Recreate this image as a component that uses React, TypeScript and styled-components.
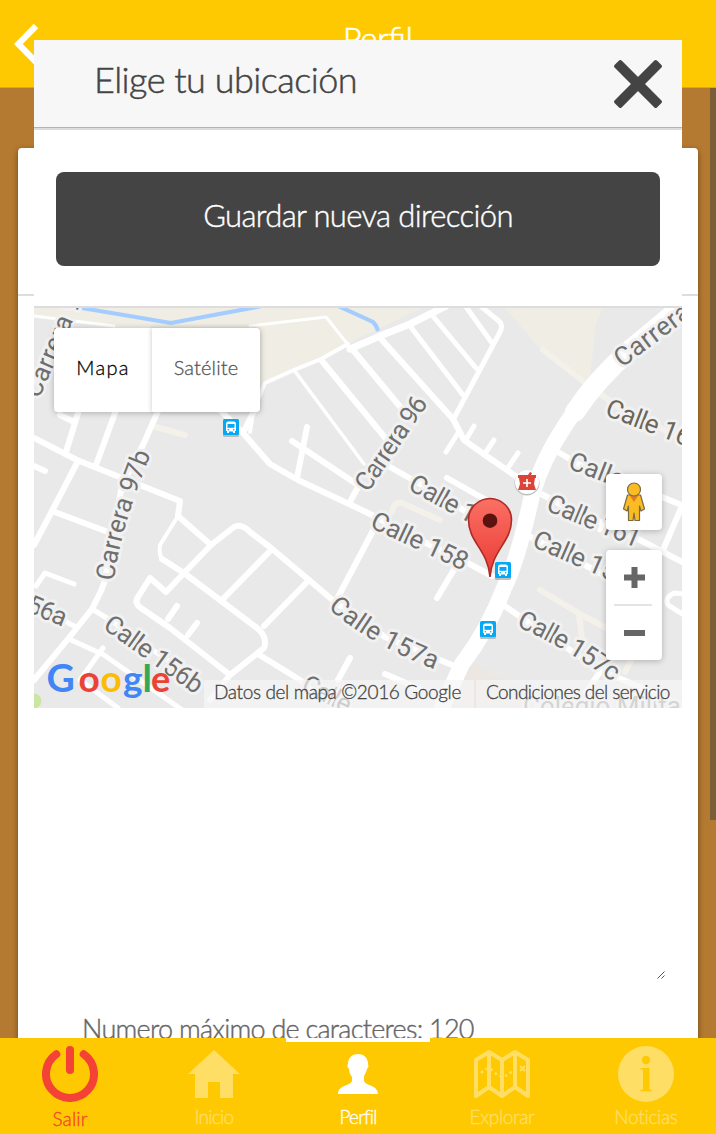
import React from "react";
import styled, { createGlobalStyle } from "styled-components";

const yellow = "#ffc901";
const faded = "#ffde66";
const dark = "#444444";
const lato = `Lato, "Open Sans", sans-serif`;

const GlobalStyle = createGlobalStyle`
  * { box-sizing: border-box; }
  html, body, #root { height: 100%; }
  body { margin: 0; overflow: hidden; background: #b57a31; font-family: ${lato}; font-weight: 300; }
`;

const Screen = styled.div`
  position: relative;
  display: flex;
  flex-direction: column;
  height: 1134px;
  overflow: hidden;
  background: #b57a31;
`;

const TopBar = styled.header`
  flex: none;
  height: 88px;
  display: flex;
  align-items: flex-start;
  padding: 24px 0 0 14px;
  background: ${yellow};
  border-bottom: 1px solid #dca916;
`;

const PageTitle = styled.h1`
  flex: 1;
  margin: -5px 18px 0 16px;
  text-align: center;
  color: #fff;
  font-size: 32px;
  line-height: 38px;
  font-weight: 300;
  -webkit-text-stroke: 0.7px #fff;
`;

const Body = styled.main`
  flex: 1;
  min-height: 0;
  display: flex;
  justify-content: space-between;
`;

const Card = styled.section`
  width: 680px;
  height: 910px;
  margin: 60px 0 0 18px;
  padding: 146px 32px 0 64px;
  display: flex;
  flex-direction: column;
  align-items: stretch;
  background: linear-gradient(#ddd, #ddd) 0 146px / 100% 2px no-repeat, #fff;
  border-radius: 4px 4px 0 0;
  box-shadow: 0 2px 6px rgba(0, 0, 0, 0.4);
`;

const NoteField = styled.div`
  height: 686px;
  display: flex;
  justify-content: flex-end;
  align-items: flex-end;
`;

const Hint = styled.p`
  margin: 32px 0 0 0;
  color: #666;
  font-size: 27px;
  line-height: 34px;
  letter-spacing: -0.73px;
  white-space: nowrap;
  -webkit-text-stroke: 0.4px #666;
`;

const ScrollThumb = styled.div`
  width: 6px;
  height: 732px;
  background: #7b5e38;
`;

const TabBar = styled.nav`
  position: relative;
  z-index: 2;
  flex: none;
  height: 96px;
  margin: 0 -4px 0 -2px;
  display: grid;
  grid-template-columns: repeat(5, 144px);
  background: ${yellow};
`;

const Tab = styled.a<{ $color: string; $active?: boolean }>`
  display: flex;
  flex-direction: column;
  align-items: center;
  padding-top: 4px;
  color: ${(p) => p.$color};
  border-top: 4px solid ${(p) => (p.$active ? "#fff" : "transparent")};
`;

const TabLabel = styled.span<{ $track: number; $drop?: number }>`
  margin-top: ${(p) => 3 + (p.$drop ?? 0)}px;
  font-size: 19px;
  line-height: 24px;
  letter-spacing: ${(p) => p.$track}px;
  -webkit-text-stroke: 0.35px currentColor;
`;

const Modal = styled.div`
  position: absolute;
  z-index: 1;
  left: 34px;
  top: 40px;
  width: 648px;
  display: flex;
  flex-direction: column;
  background: #fff;
`;

const ModalHeader = styled.div`
  height: 90px;
  display: flex;
  justify-content: space-between;
  align-items: flex-start;
  padding: 18px 18px 0 60px;
  background: #f7f7f7;
  border-bottom: 2px solid #ddd;
  box-shadow: inset 0 -1px 0 #b3b3b3;
`;

const ModalTitle = styled.h2`
  margin: 1px 0 0;
  color: ${dark};
  font-size: 36px;
  line-height: 40px;
  letter-spacing: -0.5px;
  font-weight: 300;
  -webkit-text-stroke: 0.5px ${dark};
`;

const ModalActions = styled.div`
  height: 178px;
  padding: 42px 22px 0;
  border-bottom: 2px solid #ddd;
`;

const SaveButton = styled.button`
  display: block;
  width: 100%;
  height: 94px;
  padding: 0 0 8px;
  border: 0;
  border-radius: 8px;
  background: ${dark};
  color: #fff;
  font-family: ${lato};
  font-weight: 300;
  font-size: 31px;
  letter-spacing: -0.65px;
  -webkit-text-stroke: 0.4px #fff;
`;

const MapView = styled.div`
  position: relative;
  width: 648px;
  height: 400px;
  overflow: hidden;
`;

const MapTypes = styled.div`
  position: absolute;
  left: 20px;
  top: 20px;
  display: flex;
  height: 84px;
  border-radius: 4px;
  box-shadow: 0 1px 6px rgba(0, 0, 0, 0.25);
`;

const MapType = styled.div<{ $selected?: boolean }>`
  width: ${(p) => (p.$selected ? 98 : 108)}px;
  display: flex;
  align-items: center;
  justify-content: center;
  padding-bottom: 7px;
  background: #fff;
  border-radius: ${(p) => (p.$selected ? "4px 0 0 4px" : "0 4px 4px 0")};
  box-shadow: ${(p) => (p.$selected ? "none" : "-1px 0 4px rgba(0, 0, 0, 0.16)")};
  color: ${(p) => (p.$selected ? "#000" : "#565656")};
  font-size: 20px;
  letter-spacing: ${(p) => (p.$selected ? 1.3 : 0.15)}px;
  -webkit-text-stroke: 0.3px currentColor;
`;

const MapControls = styled.div`
  position: absolute;
  left: 572px;
  top: 166px;
  width: 56px;
  display: flex;
  flex-direction: column;
  gap: 20px;
`;

const ControlBox = styled.div<{ $h: number }>`
  height: ${(p) => p.$h}px;
  display: flex;
  flex-direction: column;
  align-items: center;
  justify-content: center;
  background: #fff;
  border-radius: 4px;
  box-shadow: 0 1px 6px rgba(0, 0, 0, 0.25);
`;

const ZoomHalf = styled.div`
  flex: 1;
  display: flex;
  align-items: center;
  padding-left: 1px;
`;

const ZoomRule = styled.div`
  width: 38px;
  height: 2px;
  margin-right: 2px;
  background: #e4e4e4;
`;

const MapFooter = styled.div`
  position: absolute;
  right: 0;
  bottom: 0;
  height: 28px;
  display: flex;
  gap: 2px;
`;

const FooterItem = styled.span<{ $w: number; $track: number }>`
  width: ${(p) => p.$w}px;
  padding-left: 10px;
  background: rgba(245, 245, 245, 0.7);
  color: ${dark};
  font-size: 19px;
  line-height: 23px;
  letter-spacing: ${(p) => p.$track}px;
  white-space: nowrap;
  -webkit-text-stroke: 0.3px ${dark};
`;

const roads: [number, string][] = [
  [3, "M34 316L114 326M250 326L326 317L349 346"],
  [4, "M250 432L253 412L265 383L294 370L321 359L348 344"],
  [7, "M350 349L380 336L410 324L446 306"],
  [3.5, "M294 370L364 464"],
  [6, "M322 361L387 440M353 350L402 409M382 340L453 419L464 440L485 455L520 479"],
  [5, "M410 326L463 395M432 315L476 368M464 304L492 343M478 304L500 322Q503 326 500 332L453 420M458 433L446 452"],
  [5, "M467 438L474 426M484 455L494 440M507 469L518 453"],
  [6, "M219 409L243 433L255 409M243 433L270 464L298 480L366 512L430 545L466 562L492 576"],
  [6, "M307 427L297 478M292 441L355 483M350 502L358 487M383 463L420 484L490 526M447 478L495 505"],
  [6, "M375 527L338 597M455 568L437 598"],
  [6, "M178 516L211 545L234 527Q241 523 250 532L271 548L309 580L335 602L385 637L452 665"],
  [6, "M211 545L184 573L166 592L150 578L138 597Q134 603 141 608L170 628L230 675L210 700M168 619L177 606M188 635L197 623"],
  [4, "M178 516L160 545Q158 558 166 562"],
  [6, "M162 559L184 573L220 600L257 628Q268 637 264 648L230 675M271 550L222 600M309 580L264 626"],
  [6, "M34 438L77 460L127 480L180 501L178 516M78 413L66 452M60 415L74 422M115 413L96 465M158 411L143 445L122 485L105 580L101 591L92 609L68 639L34 680"],
  [6, "M34 466L45 471M77 463L52 511L34 545M52 511L108 532"],
  [5, "M36 586L45 573L74 584M34 605L76 627M92 609L110 620L200 683M69 639L104 655L185 712M103 648L80 680L118 708"],
  [6, "M258 654L300 680L330 706M350 658L338 680M385 674L420 689"],
  [6, "M558 452L580 465L640 488L684 506M534 490L560 504L640 540L684 563M682 506L663 550M523 533L540 542L610 578L650 596"],
  [5, "M684 594L674 593Q664 598 668 605L684 615M600 530L606 517"],
  [6, "M502 604L522 618L600 670L684 706M600 672L586 692"],
];

interface MapLabel {
  id: string;
  text: string;
  d: string;
  length: number;
  color?: string;
}

const labels: MapLabel[] = [
  { id: "c97a", text: "Carrera 9", d: "M39 399Q58 356 82 300", length: 108 },
  { id: "c97b", text: "Carrera 97b", d: "M114 581Q120 528 153 449", length: 133 },
  { id: "c96", text: "Carrera 96", d: "M368 493L430 401", length: 108 },
  { id: "c159", text: "Calle 159", d: "M407 489L499 539", length: 100 },
  { id: "c158", text: "Calle 158", d: "M369 527L468 573", length: 104 },
  { id: "c157a", text: "Calle 157a", d: "M328 608Q372 647 444 673", length: 124 },
  { id: "c156b", text: "Calle 156b", d: "M102 628L199 697", length: 115 },
  { id: "c156a", text: "56a", d: "M25 611L68 629", length: 41 },
  { id: "c156", text: "Calle", d: "M300 690L390 736", length: 52 },
  { id: "carr", text: "Carrera 9", d: "M622 368L716 298", length: 110 },
  { id: "c160b", text: "Calle 160", d: "M604 415L706 454", length: 103, color: "#6b6658" },
  { id: "c162", text: "Calle 16", d: "M567 468L660 504", length: 92 },
  { id: "c161", text: "Calle 161", d: "M545 510L644 551", length: 99 },
  { id: "c159b", text: "Calle 159", d: "M531 546L632 590", length: 103 },
  { id: "c157c", text: "Calle 157c", d: "M516 626Q570 650 618 686", length: 112 },
];

const logo: [string, number, number, string][] = [
  ["G", 46.5, 39, "#4285f4"],
  ["o", 78.5, 37, "#ea4335"],
  ["o", 100.5, 37, "#fbbc05"],
  ["g", 123, 37, "#4285f4"],
  ["l", 142.5, 38, "#34a853"],
  ["e", 151, 36, "#ea4335"],
];

function Bus({ x, y }: { x: number; y: number }) {
  return (
    <g transform={`translate(${x} ${y})`}>
      <rect y="1" width="16" height="17" rx="1.5" fill="#a5a5a5" opacity="0.7" />
      <rect width="16" height="16" rx="1.5" fill="#03a9f4" />
      <path d="M3 5Q3 2.500 5 2.500H11Q13 2.500 13 5V12H12V14H10V12.500H6V14H4V12H3Z" fill="#fff" />
      <rect x="4.500" y="5" width="7" height="3.800" fill="#03a9f4" />
      <circle cx="5.300" cy="10.700" r=".8" fill="#03a9f4" />
      <circle cx="10.700" cy="10.700" r=".8" fill="#03a9f4" />
    </g>
  );
}

function StreetMap() {
  return (
    <svg width="648" height="400" viewBox="34 308 648 400" fill="none">
      <defs>
        <linearGradient id="pin" x1="0" y1="0" x2="0" y2="1">
          <stop offset="0" stopColor="#fb7064" />
          <stop offset="1" stopColor="#e93a34" />
        </linearGradient>
        {labels.map((l) => (
          <path key={l.id} id={l.id} d={l.d} />
        ))}
      </defs>
      <rect x="34" y="308" width="648" height="400" fill="#e9e9e9" />
      <path d="M34 308V316L114 326L160 390H258L265 383L294 370L347 344L422 308Z" fill="#efede4" />
      <path d="M505 308H602L596 324L589 386L541 350Z" fill="#efede4" />
      <path d="M466 660L500 678L540 692V708H440Z" fill="#ece8e1" />
      <circle cx="34" cy="701" r="7.500" fill="#cbe6a3" />
      <path d="M82 308L171 323L262 306M336 305L373 322Q377 326 378 331" stroke="#a3ccff" strokeWidth="4" />
      <g stroke="#f4f0ea" strokeWidth="6" strokeLinecap="round" strokeLinejoin="round">
        <path d="M156 427L185 435M392 512Q394 501 402 503L440 520M543 350L592 388L620 408L684 440" />
        <path d="M540 590L580 614L640 646M579 615L583 645M634 655L625 672" />
      </g>
      <g stroke="#fff" strokeLinecap="round" strokeLinejoin="round">
        {roads.map(([w, d]) => (
          <path key={d} d={d} strokeWidth={w} />
        ))}
        <path d="M690 300L630 350Q596 380 566 424Q542 460 532 495Q518 560 504 588Q488 630 462 664L440 712" strokeWidth="16" />
        <path d="M690 300L630 350Q596 380 575 412" strokeWidth="20" />
      </g>
      <g fontFamily="Roboto, sans-serif" fontSize="26" fontWeight="400" stroke="#f1f1f1" strokeWidth="6" strokeLinejoin="round" paintOrder="stroke">
        {labels.map((l) => (
          <text key={l.id} fill={l.color ?? "#6f6f6f"}>
            <textPath href={`#${l.id}`} textLength={l.length}>
              {l.text}
            </textPath>
          </text>
        ))}
        <text x="523" y="715" fill="#858585" textLength="158">Colegio Milita</text>
      </g>
      <Bus x={223} y={419} />
      <Bus x={495} y={562} />
      <Bus x={480} y={621} />
      <circle cx="527" cy="483" r="12.500" fill="#bdbdbd" />
      <circle cx="527" cy="482" r="12" fill="#fff" />
      <path d="M518 475H528L530 472L532 473L531 475H536V478H535L534 484L536 490H518L520 484L519 478H518Z" fill="#db4437" />
      <path d="M527 479V487M523 483H531" stroke="#fff" strokeWidth="1.600" />
      <path d="M490 577C488 550 468.500 542 468.500 520A21.500 21.500 0 0 1 511.500 520C511.500 542 492 550 490 577Z" fill="url(#pin)" stroke="#ad2b27" strokeWidth="1.600" />
      <circle cx="490" cy="520.700" r="7.300" fill="#5c120f" />
      <text y="692" fontFamily="Lato, sans-serif" fontWeight="700">
        {logo.map(([ch, x, size, color]) => (
          <tspan key={x} x={x} fontSize={size} fill={color}>
            {ch}
          </tspan>
        ))}
      </text>
    </svg>
  );
}

function Pegman() {
  return (
    <svg width="24" height="40" viewBox="0 0 24 40">
      <path d="M5.500 13H18.500L22.500 27L19 29L17.500 24V38.500H13L12 31L11 38.500H6.500V24L5 29L1.500 27Z" fill="#fbbb22" stroke="#7c6a43" strokeWidth="1.200" strokeLinejoin="round" />
      <path d="M8 14H16L12 20Z" fill="#e37b25" />
      <circle cx="12" cy="7.500" r="6.500" fill="#fbbb22" stroke="#7c6a43" strokeWidth="1.200" />
    </svg>
  );
}

function CloseIcon() {
  return (
    <svg width="52" height="52" viewBox="0 0 52 52" fill={dark}>
      <rect x="-4" y="21" width="60" height="10" rx="1.8" transform="rotate(45 26 26)" />
      <rect x="-4" y="21" width="60" height="10" rx="1.8" transform="rotate(-45 26 26)" />
    </svg>
  );
}

function PowerIcon() {
  return (
    <svg width="56" height="56" viewBox="0 0 56 56" fill="none" stroke="currentColor" strokeWidth="8" strokeLinecap="round">
      <path d="M14.300 8.300A24 24 0 1 0 41.700 8.300M28 4V24" />
    </svg>
  );
}

function HomeIcon() {
  return (
    <svg width="56" height="56" viewBox="0 0 56 56" fill="currentColor">
      <path d="M28 4L54 28H47V52H34V36H22V52H9V28H2Z" />
    </svg>
  );
}

function PersonIcon() {
  return (
    <svg width="56" height="56" viewBox="0 0 56 56" fill="currentColor">
      <path d="M28 8C34 8 38 12 38 18C39 20 38 22 37 23C36 27 34 29 34 31V35C36 40 48 39 48 48H8C8 39 20 40 22 35V31C20 28 19 26 19 23C17 21 17 19 18 18C18 12 22 8 28 8Z" />
    </svg>
  );
}

function MapIcon() {
  return (
    <svg width="56" height="56" viewBox="0 0 56 56" fill="none" stroke="currentColor" strokeWidth="4" strokeLinejoin="round">
      <path d="M2 14L15 6L28 14L41 6L54 14V50L41 41L28 50L15 41L2 50ZM15 6V41M28 14V50M41 6V41" />
      <path d="M7 27Q14 19 20 26Q28 34 36 27L44 22" strokeWidth="2.600" strokeDasharray="2.500 3" />
      <path d="M46 20L51 25M51 20L46 25" strokeWidth="2" />
    </svg>
  );
}

function InfoIcon() {
  return (
    <svg width="56" height="56" viewBox="0 0 56 56">
      <circle cx="28" cy="28" r="28" fill="currentColor" />
      <g fill={yellow}>
        <circle cx="28" cy="14" r="4.200" />
        <rect x="25" y="22" width="6.500" height="22" />
        <rect x="22.500" y="22" width="8" height="1.500" />
        <rect x="22.500" y="43.700" width="11" height="1.600" />
      </g>
    </svg>
  );
}

export default function App() {
  return (
    <>
      <GlobalStyle />
      <Screen>
        <TopBar>
          <svg width="28" height="40" viewBox="0 0 28 40" fill="none" stroke="#fff" strokeWidth="6.200">
            <path d="M22 2L4.300 20L22 38" />
          </svg>
          <PageTitle>Perfil</PageTitle>
        </TopBar>
        <Body>
          <Card>
            <NoteField>
              <svg width="9" height="9" viewBox="0 0 9 9" stroke="#555" strokeWidth="1">
                <path d="M0.500 7.500L7.500 0.500M4.500 7.500L7.500 4.500" />
              </svg>
            </NoteField>
            <Hint>Numero máximo de caracteres: 120</Hint>
          </Card>
          <ScrollThumb />
        </Body>
        <TabBar>
          <Tab $color="#f44336">
            <PowerIcon />
            <TabLabel $track={0.15} $drop={2}>Salir</TabLabel>
          </Tab>
          <Tab $color={faded}>
            <HomeIcon />
            <TabLabel $track={-0.7}>Inicio</TabLabel>
          </Tab>
          <Tab $color="#fff" $active>
            <PersonIcon />
            <TabLabel $track={-0.8}>Perfil</TabLabel>
          </Tab>
          <Tab $color={faded}>
            <MapIcon />
            <TabLabel $track={-0.35}>Explorar</TabLabel>
          </Tab>
          <Tab $color={faded}>
            <InfoIcon />
            <TabLabel $track={-0.3}>Noticias</TabLabel>
          </Tab>
        </TabBar>
        <Modal>
          <ModalHeader>
            <ModalTitle>Elige tu ubicación</ModalTitle>
            <CloseIcon />
          </ModalHeader>
          <ModalActions>
            <SaveButton>Guardar nueva dirección</SaveButton>
          </ModalActions>
          <MapView>
            <StreetMap />
            <MapTypes>
              <MapType $selected>Mapa</MapType>
              <MapType>Satélite</MapType>
            </MapTypes>
            <MapControls>
              <ControlBox $h={56}>
                <Pegman />
              </ControlBox>
              <ControlBox $h={110}>
                <ZoomHalf>
                  <svg width="21" height="21" viewBox="0 0 21 21" stroke="#666" strokeWidth="6">
                    <path d="M0 10.500H21M10.500 0V21" />
                  </svg>
                </ZoomHalf>
                <ZoomRule />
                <ZoomHalf>
                  <svg width="21" height="6" viewBox="0 0 21 6" stroke="#666" strokeWidth="6">
                    <path d="M0 3H21" />
                  </svg>
                </ZoomHalf>
              </ControlBox>
            </MapControls>
            <MapFooter>
              <FooterItem $w={270} $track={-0.36}>Datos del mapa ©2016 Google</FooterItem>
              <FooterItem $w={206} $track={-0.58}>Condiciones del servicio</FooterItem>
            </MapFooter>
          </MapView>
        </Modal>
      </Screen>
    </>
  );
}
